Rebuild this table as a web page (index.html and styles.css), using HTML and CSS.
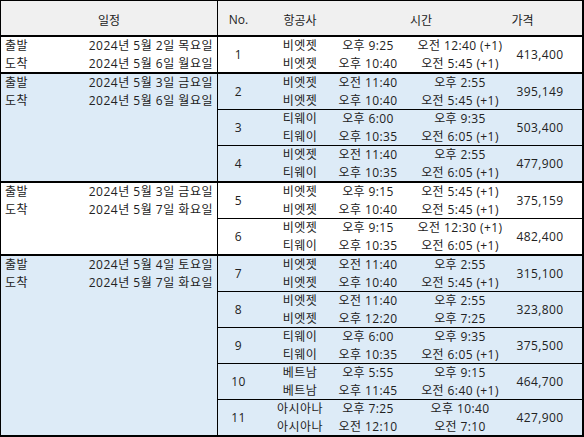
FILE: index.html
```html
<!DOCTYPE html>
<html lang="ko">
<head>
<meta charset="utf-8">
<link rel="stylesheet" href="styles.css">
</head>
<body>
<div class="table">
  <div class="head">
    <div class="h-sched">일정</div>
    <div class="h-no">No.</div>
    <div class="h-air">항공사</div>
    <div class="h-time">시간</div>
    <div class="h-price">가격</div>
  </div>

  <div class="group">
    <div class="sched">
      <div class="sline"><span>출발</span><span>2024년 5월 2일 목요일</span></div>
      <div class="sline"><span>도착</span><span>2024년 5월 6일 월요일</span></div>
    </div>
    <div class="flights">
      <div class="flight">
        <div class="c no">1</div>
        <div class="c air"><span>비엣젯</span><span>비엣젯</span></div>
        <div class="c dep"><span>오후 9:25</span><span>오후 10:40</span></div>
        <div class="c arr"><span>오전 12:40 (+1)</span><span>오전 5:45 (+1)</span></div>
        <div class="c price">413,400</div>
      </div>
    </div>
  </div>

  <div class="group blue">
    <div class="sched">
      <div class="sline"><span>출발</span><span>2024년 5월 3일 금요일</span></div>
      <div class="sline"><span>도착</span><span>2024년 5월 6일 월요일</span></div>
    </div>
    <div class="flights">
      <div class="flight">
        <div class="c no">2</div>
        <div class="c air"><span>비엣젯</span><span>비엣젯</span></div>
        <div class="c dep"><span>오전 11:40</span><span>오후 10:40</span></div>
        <div class="c arr"><span>오후 2:55</span><span>오전 5:45 (+1)</span></div>
        <div class="c price">395,149</div>
      </div>
      <div class="flight">
        <div class="c no">3</div>
        <div class="c air"><span>티웨이</span><span>티웨이</span></div>
        <div class="c dep"><span>오후 6:00</span><span>오후 10:35</span></div>
        <div class="c arr"><span>오후 9:35</span><span>오전 6:05 (+1)</span></div>
        <div class="c price">503,400</div>
      </div>
      <div class="flight">
        <div class="c no">4</div>
        <div class="c air"><span>비엣젯</span><span>티웨이</span></div>
        <div class="c dep"><span>오전 11:40</span><span>오후 10:35</span></div>
        <div class="c arr"><span>오후 2:55</span><span>오전 6:05 (+1)</span></div>
        <div class="c price">477,900</div>
      </div>
    </div>
  </div>

  <div class="group">
    <div class="sched">
      <div class="sline"><span>출발</span><span>2024년 5월 3일 금요일</span></div>
      <div class="sline"><span>도착</span><span>2024년 5월 7일 화요일</span></div>
    </div>
    <div class="flights">
      <div class="flight">
        <div class="c no">5</div>
        <div class="c air"><span>비엣젯</span><span>비엣젯</span></div>
        <div class="c dep"><span>오후 9:15</span><span>오후 10:40</span></div>
        <div class="c arr"><span>오전 5:45 (+1)</span><span>오전 5:45 (+1)</span></div>
        <div class="c price">375,159</div>
      </div>
      <div class="flight">
        <div class="c no">6</div>
        <div class="c air"><span>비엣젯</span><span>티웨이</span></div>
        <div class="c dep"><span>오후 9:15</span><span>오후 10:35</span></div>
        <div class="c arr"><span>오전 12:30 (+1)</span><span>오전 6:05 (+1)</span></div>
        <div class="c price">482,400</div>
      </div>
    </div>
  </div>

  <div class="group blue">
    <div class="sched">
      <div class="sline"><span>출발</span><span>2024년 5월 4일 토요일</span></div>
      <div class="sline"><span>도착</span><span>2024년 5월 7일 화요일</span></div>
    </div>
    <div class="flights">
      <div class="flight">
        <div class="c no">7</div>
        <div class="c air"><span>비엣젯</span><span>비엣젯</span></div>
        <div class="c dep"><span>오전 11:40</span><span>오후 10:40</span></div>
        <div class="c arr"><span>오후 2:55</span><span>오전 5:45 (+1)</span></div>
        <div class="c price">315,100</div>
      </div>
      <div class="flight">
        <div class="c no">8</div>
        <div class="c air"><span>비엣젯</span><span>비엣젯</span></div>
        <div class="c dep"><span>오전 11:40</span><span>오후 12:20</span></div>
        <div class="c arr"><span>오후 2:55</span><span>오후 7:25</span></div>
        <div class="c price">323,800</div>
      </div>
      <div class="flight">
        <div class="c no">9</div>
        <div class="c air"><span>티웨이</span><span>티웨이</span></div>
        <div class="c dep"><span>오후 6:00</span><span>오후 10:35</span></div>
        <div class="c arr"><span>오후 9:35</span><span>오전 6:05 (+1)</span></div>
        <div class="c price">375,500</div>
      </div>
      <div class="flight">
        <div class="c no">10</div>
        <div class="c air"><span>베트남</span><span>베트남</span></div>
        <div class="c dep"><span>오후 5:55</span><span>오후 11:45</span></div>
        <div class="c arr"><span>오후 9:15</span><span>오전 6:40 (+1)</span></div>
        <div class="c price">464,700</div>
      </div>
      <div class="flight">
        <div class="c no">11</div>
        <div class="c air"><span>아시아나</span><span>아시아나</span></div>
        <div class="c dep"><span>오후 7:25</span><span>오전 12:10</span></div>
        <div class="c arr"><span>오후 10:40</span><span>오전 7:10</span></div>
        <div class="c price">427,900</div>
      </div>
    </div>
  </div>
</div>
</body>
</html>
```

FILE: styles.css
```css
html, body {
  margin: 0;
  padding: 0;
  background: #ffffff;
}
body {
  font-family: "Open Sans", "Noto Sans CJK KR", sans-serif;
  font-size: 12px;
  color: #222222;
}
.table {
  width: 584px;
  height: 437px;
  box-sizing: border-box;
  border: 1px solid #000;
  border-right-width: 2px;
  border-bottom-width: 2px;
  display: flex;
  flex-direction: column;
  overflow: hidden;
}
.head {
  display: flex;
  height: 36px;
  box-sizing: border-box;
  background: #f0f0f0;
  border-bottom: 2px solid #000;
  flex-shrink: 0;
}
.head > div {
  display: flex;
  align-items: center;
  justify-content: center;
  padding-top: 3px;
  box-sizing: border-box;
  white-space: nowrap;
}
.h-sched {
  width: 217px;
  border-right: 1px solid #000;
}
.h-no { width: 41px; }
.h-air { width: 82px; }
.h-time { width: 160px; }
.h-price { width: 43px; }

.group {
  display: flex;
  flex-shrink: 0;
}
.group + .group {
  border-top: 2px solid #000;
}
.group.blue {
  background: #ddebf7;
}
.sched {
  width: 217px;
  box-sizing: border-box;
  border-right: 1px solid #000;
  padding: 0 4px 0 4px;
  flex-shrink: 0;
}
.sline {
  display: flex;
  justify-content: space-between;
  height: 17.5px;
  line-height: 17.5px;
  white-space: nowrap;
  letter-spacing: 0.5px;
}
.flights {
  flex: 1;
  display: flex;
  flex-direction: column;
}
.flight {
  display: flex;
  height: 35px;
}
.flight + .flight {
  border-top: 1px solid #000;
}
.c {
  display: flex;
  flex-direction: column;
  justify-content: center;
  align-items: center;
  white-space: nowrap;
  flex-shrink: 0;
  letter-spacing: 0.4px;
}
.c span {
  display: block;
  height: 17.5px;
  line-height: 17.5px;
}
.no { width: 41px; }
.air { width: 82px; }
.dep { width: 54px; }
.arr { width: 130px; }
.price { width: 30px; }
```
